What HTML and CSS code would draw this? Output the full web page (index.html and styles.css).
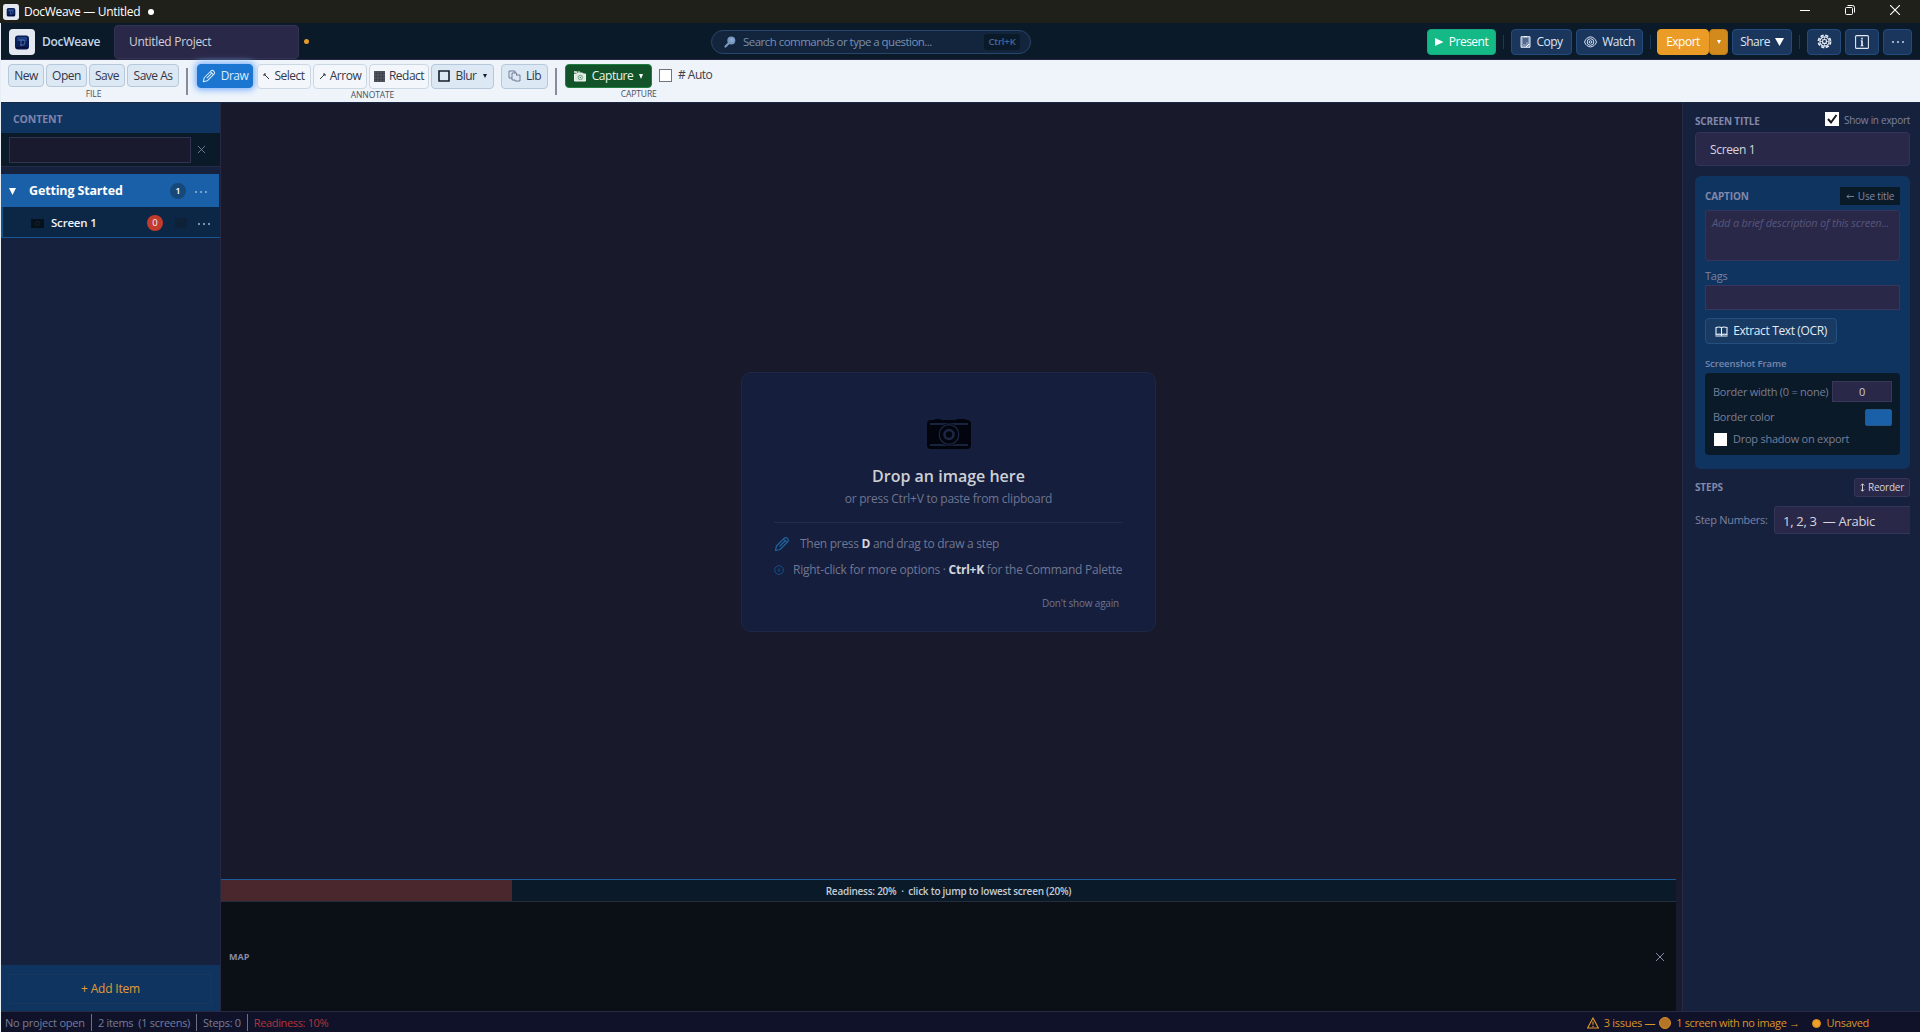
FILE: index.html
```html
<!DOCTYPE html>
<html lang="en">
<head>
<meta charset="utf-8">
<title>DocWeave — Untitled</title>
<link rel="stylesheet" href="styles.css">
</head>
<body>
<svg class="defs" width="0" height="0">
  <symbol id="pencil" viewBox="0 0 16 16"><path d="M1.500 14.500l1-4.500L10.500 2c1.800-1.500 5 1.500 3.500 3.500L6 13.500zM9.500 3l3.500 3.500M5.500 10.500L11 5" fill="none" stroke="currentColor" stroke-width="1.200" stroke-linejoin="round"/></symbol>
  <symbol id="close" viewBox="0 0 10 10"><path d="M1 1l8 8M9 1l-8 8" fill="none" stroke="currentColor" stroke-width="1"/></symbol>
  <symbol id="logo" viewBox="0 0 26 26"><rect width="26" height="26" rx="4" fill="#e4e8f0"/><rect x="6" y="6.500" width="14" height="14" rx="3" fill="#0b1d56"/><path d="M8 8h10v4H8z" fill="#254b94" opacity=".7"/><path d="M10 11h5q2 2 0 5h-4M12 11v6" fill="none" stroke="#5577b8" stroke-width=".8"/><path d="M7 18h12v1.500H7z" fill="#050d35"/></symbol>
</svg>
<div class="window">
  <div class="titlebar">
    <svg class="tb-logo"><use href="#logo"/></svg>
    <span class="tb-title">DocWeave — Untitled</span><i class="tb-dot"></i>
    <div class="winbtns">
      <svg width="10" height="10" viewBox="0 0 10 10"><path d="M0 5.500h10" stroke="#fff"/></svg>
      <svg width="10" height="10" viewBox="0 0 10 10"><path d="M.5 3.500q0-1 1-1h5q1 0 1 1v5q0 1-1 1h-5q-1 0-1-1zM2.500 .5h5q2 0 2 2v5" fill="none" stroke="#fff"/></svg>
      <svg width="10" height="10" viewBox="0 0 10 10"><path d="M0 0l10 10M10 0L0 10" stroke="#fff" stroke-width="1.100"/></svg>
    </div>
  </div>
  <div class="app">
    <header class="header">
      <svg class="logo"><use href="#logo"/></svg>
      <span class="brand">DocWeave</span>
      <div class="project">Untitled Project</div>
      <i class="dirty"></i>
      <div class="search">
        <svg width="12" height="12" viewBox="0 0 12 12"><circle cx="7.300" cy="4.500" r="4" fill="#7898c0"/><circle cx="7.800" cy="4" r="2" fill="#a2badb" opacity=".5"/><path d="M4.500 7.500L1.500 10.500" stroke="#7d99c0" stroke-width="2.200" stroke-linecap="round"/></svg>
        <span class="search-text">Search commands or type a question...</span>
        <kbd>Ctrl+K</kbd>
      </div>
      <nav class="actions">
        <button class="btn present"><svg width="9" height="8" viewBox="0 0 9 8"><path d="M0 0l8.500 4L0 8z" fill="#fff"/></svg>Present</button>
        <i class="hsep"></i>
        <button class="btn copy"><svg width="11" height="12" viewBox="0 0 11 12"><path d="M1 .7h9v10.600H1z" fill="#7f93b5" stroke="#e1eaf5"/><path d="M3 3h5M3 5h5M3 7h3" stroke="#243c63" stroke-width="1"/><path d="M4 .5h3M6 11l3-3" stroke="#fff"/></svg>Copy</button>
        <button class="btn watch"><svg width="13" height="12" viewBox="0 0 13 12"><g fill="none" stroke="#d8e4f2"><path d="M.5 6C3-.8 10-.8 12.500 6 10 12.500 3 12.500.5 6z"/><circle cx="6.500" cy="6" r="3.300"/><circle cx="6.500" cy="6" r="1.300"/></g></svg>Watch</button>
        <i class="hsep tight"></i>
        <div class="split"><button class="btn export">Export</button><button class="btn exdrop"><svg width="4" height="4" viewBox="0 0 4 4"><path d="M0 0h4L2 4z" fill="#fff"/></svg></button></div>
        <button class="btn share">Share<svg width="9" height="8" viewBox="0 0 9 8"><path d="M0 0h9L4.500 8z" fill="#fff"/></svg></button>
        <i class="hsep"></i>
        <button class="btn gear"><svg width="15" height="15" viewBox="0 0 15 15"><g fill="none" stroke="#e6eef8" stroke-width="1.100"><circle cx="7.500" cy="7.500" r="2"/><circle cx="7.500" cy="7.500" r="4.600"/><circle cx="7.500" cy="7.500" r="6.100" stroke-width="1.700" stroke-dasharray="3.190 1.600"/><path d="M7.500 3v2M7.500 10v2M3 7.500h2M10 7.500h2M4.300 4.300l1.500 1.500M9.200 9.200l1.500 1.500M10.700 4.300L9.200 5.800M5.800 9.200l-1.500 1.500" stroke-width=".7"/></g></svg></button>
        <button class="btn gear"><svg width="14" height="14" viewBox="0 0 14 14"><rect x=".6" y=".6" width="12.800" height="12.800" rx="1" fill="none" stroke="#dfe8f3" stroke-width="1.100"/><path d="M7 5.500v5.500M7 2.700v1.700" fill="none" stroke="#fff" stroke-width="1.500"/><path d="M5.700 5.700H7M5.500 10.800h3" stroke="#fff" stroke-width=".7"/></svg></button>
        <button class="btn more"><i></i><i></i><i></i></button>
      </nav>
    </header>
    <div class="toolbar">
      <section class="group">
        <div class="tools"><button class="tool w36">New</button><button class="tool w41">Open</button><button class="tool w36">Save</button><button class="tool w52">Save As</button></div>
        <small>FILE</small>
      </section>
      <i class="tsep"></i>
      <section class="group annotate">
        <div class="tools">
          <button class="tool draw"><svg width="14" height="14"><use href="#pencil"/></svg>Draw</button>
          <button class="tool light sel"><svg width="7" height="7" viewBox="0 0 7 7"><path d="M1 1l5 5M1 3V1h2" fill="none" stroke="#34343f"/></svg>Select</button>
          <button class="tool light arr"><svg width="7" height="7" viewBox="0 0 7 7"><path d="M1 6l5-5M4 1h2v2" fill="none" stroke="#34343f"/></svg>Arrow</button>
          <button class="tool light red"><svg width="11" height="11" viewBox="0 0 11 11"><path d="M0 0h11v11H0z" fill="#51545c"/><path d="M0 2.500h11M0 5.500h11M0 8.500h11M2.500 0v11M5.500 0v11M8.500 0v11" stroke="#3b3d46" stroke-width=".6"/></svg>Redact</button>
          <button class="tool blur"><svg width="12" height="12" viewBox="0 0 12 12"><path d="M1 1h10v10H1z" fill="none" stroke="#171c2b" stroke-width="1.600"/></svg>Blur<svg class="caret" width="4" height="4" viewBox="0 0 4 4"><path d="M0 0h4L2 4z" fill="#1b1b2b"/></svg></button>
          <button class="tool lib"><svg width="13" height="12" viewBox="0 0 13 12"><g fill="#dce8f4" stroke="#63708a" stroke-width=".9"><path d="M1 1h6v7H1z"/><path d="M4 8V3h4.500v7H4z"/><path d="M8.500 5H12v6H7v-1"/></g></svg>Lib</button>
        </div>
        <small>ANNOTATE</small>
      </section>
      <i class="tsep second"></i>
      <section class="group capgroup">
        <div class="tools">
          <button class="tool capture"><svg width="12" height="11" viewBox="0 0 12 11"><path d="M.5 3h2l1-1h5l1 1h2v7H.5zM1 0v2M3 .5L2.500 2M0 1h3M4 1h2" fill="#dbe8df" stroke="#eef5ef"/><circle cx="6.300" cy="6.500" r="2.200" fill="none" stroke="#7aa587"/><circle cx="6.300" cy="6.500" r=".7" fill="#4b7f5b"/></svg>Capture<svg class="caret" width="4" height="5" viewBox="0 0 4 5"><path d="M0 0h4L2 5z" fill="#fff"/></svg></button>
          <label class="auto"><i class="box"></i># Auto</label>
        </div>
        <small>CAPTURE</small>
      </section>
    </div>
    <div class="body">
      <aside class="sidebar">
        <h2>CONTENT</h2>
        <div class="filter"><div class="field"></div><svg width="9" height="9"><use href="#close"/></svg></div>
        <div class="chapter"><svg width="7" height="7" viewBox="0 0 7 7"><path d="M0 0h7L3.500 7z" fill="#fff"/></svg><b>Getting Started</b><span class="count">1</span><span class="dots"><i></i><i></i><i></i></span></div>
        <div class="screen"><svg class="thumb" width="13" height="10" viewBox="0 0 13 10"><path d="M0 1h13v9H0z" fill="#07111b"/><circle cx="6.500" cy="5.500" r="2" fill="none" stroke="#102232"/></svg><b>Screen 1</b><span class="count zero">0</span><i class="ghost"></i><span class="dots"><i></i><i></i><i></i></span></div>
        <div class="grow"></div>
        <div class="add"><button>+ Add Item</button></div>
      </aside>
      <main class="main">
        <div class="canvas">
          <div class="drop">
            <svg class="camera" width="46" height="32" viewBox="0 0 46 32"><path d="M4 2h4l1-1h5l1 1h15l1-1h8l1 1h1q4 0 4 4v21q0 4-4 4H5q-4 0-4-4V6q0-3 3-4z" fill="#02050d"/><path d="M4 6h38M4 27h38" stroke="#18233d" stroke-width="2"/><circle cx="23" cy="16.500" r="11" fill="#02050d"/><circle cx="23" cy="16.500" r="9.800" fill="none" stroke="#1b2745" stroke-width="1.300"/><circle cx="23" cy="16.500" r="4.500" fill="none" stroke="#1b2745" stroke-width="2.600"/></svg>
            <h1>Drop an image here</h1>
            <p class="sub">or press Ctrl+V to paste from clipboard</p>
            <hr>
            <p class="tip"><svg width="16" height="16"><use href="#pencil"/></svg><span>Then press <b>D</b> and drag to draw a step</span></p>
            <p class="tip two"><svg width="10" height="10" viewBox="0 0 10 10"><circle cx="5" cy="5" r="4.300" fill="none" stroke="#174f8d"/><path d="M5 3v4M3.500 5h3" stroke="#154273"/></svg><span>Right-click for more options · <b>Ctrl+K</b> for the Command Palette</span></p>
            <p class="dont">Don't show again</p>
          </div>
        </div>
        <div class="readiness"><div class="fill" style="width:20%"></div><span>Readiness: 20% &nbsp;·&nbsp; click to jump to lowest screen (20%)</span></div>
        <div class="map"><b>MAP</b><svg width="10" height="10"><use href="#close"/></svg></div>
      </main>
      <aside class="props">
        <div class="row head"><h3>SCREEN TITLE</h3><label class="show"><svg width="14" height="14" viewBox="0 0 14 14"><path d="M0 0h14v14H0z" fill="#fff"/><path d="M3 7l3 3.500L11.500 3" fill="none" stroke="#16161c" stroke-width="2"/></svg><span>Show in export</span></label></div>
        <div class="title-field"><span>Screen 1</span></div>
        <section class="card">
          <div class="row caprow"><h3>CAPTION</h3><button class="use"><svg width="8" height="5" viewBox="0 0 8 5"><path d="M8 2.500H1M3 .5l-2 2 2 2" fill="none" stroke="#8087a5" stroke-width=".9"/></svg>Use title</button></div>
          <div class="area"><em>Add a brief description of this screen...</em></div>
          <p class="tags">Tags</p>
          <div class="tag-field"></div>
          <button class="ocr"><svg width="13" height="11" viewBox="0 0 13 11"><path d="M1 1.500q3-1 5.500 0 2.500-1 5.500 0v7q-3-.7-5.500 0-2.500-.7-5.500 0zM6.500 1.500v8M.5 10h12" fill="none" stroke="#eaf2fb" stroke-width="1.100"/></svg><span>Extract Text (OCR)</span></button>
          <h4>Screenshot Frame</h4>
          <div class="frame">
            <div class="row bw"><span>Border width (0 = none)</span><div class="num">0</div></div>
            <div class="row bc"><span>Border color</span><i class="swatch"></i></div>
            <label class="shadow"><i></i><span>Drop shadow on export</span></label>
          </div>
        </section>
        <div class="row steps"><h3>STEPS</h3><button class="reorder"><svg width="5" height="9" viewBox="0 0 5 9"><path d="M2.500 1v7M.8 2.500L2.500 .8l1.700 1.700M.8 6.500l1.700 1.700 1.700-1.700" fill="none" stroke="#e0e0e8" stroke-width=".9"/></svg>Reorder</button></div>
        <div class="numbers"><span>Step Numbers:</span><div class="select">1, 2, 3&nbsp; — Arabic</div></div>
      </aside>
    </div>
    <footer class="status">
      <span class="s1">No project open</span><i></i><span class="s2">2 items &nbsp;(1 screens)</span><i></i><span class="s3">Steps: 0</span><i></i><span class="s4">Readiness: 10%</span>
      <div class="warn">
        <svg width="12" height="12" viewBox="0 0 12 12"><path d="M6 1l5.400 10H.6zM6 4.500v3.300M6 8.800v1.200" fill="none" stroke="#e39a27" stroke-width="1.100"/></svg>
        <span class="s5">3 issues —</span><i class="orb"></i><span class="s6">1 screen with no image →</span><i class="orb solid"></i><span class="s7">Unsaved</span>
      </div>
    </footer>
  </div>
</div>
</body>
</html>
```
FILE: styles.css
```css
* { box-sizing: border-box; }
body { margin: 0; font: 12px/16px "Open Sans", "Noto Sans", sans-serif; color: #e0e0e8; background: #1a1a2e; }
h1, h2, h3, h4, p { margin: 0; }
button { font: inherit; color: inherit; padding: 0; margin: 0; white-space: nowrap; }
svg { display: block; flex: none; }
span, b, label { white-space: nowrap; }
.defs { position: absolute; }
.window { width: 1920px; height: 1032px; display: flex; flex-direction: column; overflow: hidden; }

.titlebar { height: 23px; background: #20201b; display: flex; align-items: center; padding-left: 3px; color: #fff; }
.tb-logo { width: 16px; height: 16px; margin-right: 5px; }
.tb-title { font-size: 12px; letter-spacing: -.3px; }
.tb-dot { width: 6px; height: 6px; border-radius: 50%; background: #fff; margin: 1px 0 0 8px; }
.winbtns { margin-left: auto; display: flex; gap: 35px; padding-right: 20px; margin-top: -3px; }

.app { height: 1009px; border-left: 1px solid #e8eef5; display: flex; flex-direction: column; }
.header { height: 37px; background: #0b1a28; border-bottom: 1px solid #262944; display: flex; align-items: center; padding: 1px 8px 0; }
.logo { width: 26px; height: 26px; }
.brand { width: 79px; padding-left: 7px; font-weight: 600; font-size: 12px; letter-spacing: -.3px; color: #c3d7ec; }
.project { width: 185px; height: 34px; background: #2a2848; border: 1px solid #343253; border-radius: 4px; padding: 8px 14px; font-size: 12px; letter-spacing: -.3px; color: #cfd0da; }
.dirty { width: 5px; height: 5px; border-radius: 50%; background: #e29a2c; margin: 0 0 0 5px; }
.search { width: 320px; height: 24px; margin-left: 402px; border: 1px solid #28466b; border-radius: 12px; background: #13243d; display: flex; align-items: center; padding: 0 10px 0 12px; color: #7890b0; }
.search-text { margin-left: 7px; font-size: 11.500px; letter-spacing: -.53px; }
kbd { margin-left: auto; width: 36px; text-align: center; background: #0b1a28; border-radius: 3px; font: 600 9.500px/16px "Open Sans", sans-serif; letter-spacing: -.15px; color: #45699b; }
.actions { margin-left: auto; display: flex; align-items: center; }
.btn { height: 26px; border: 1px solid #234b7c; border-radius: 4px; background: #1b365d; color: #dbe6f4; display: flex; align-items: center; justify-content: center; font-size: 12px; gap: 5px; letter-spacing: -.5px; }
.present { width: 69px; background: #14b985; border-color: #17a97e; color: #fff; gap: 5px; }
.hsep { width: 1px; height: 14px; background: #1b3856; margin: 0 7px; }
.hsep.tight { margin-right: 6px; }
.copy { width: 61px; margin-right: 4px; }
.watch { width: 67px; }
.split { display: flex; margin-right: 4px; }
.export { width: 52px; background: #eb9c27; border-color: #eb9c27; color: #fff; }
.exdrop { width: 19px; background: #d38a1c; border-color: #c17d1d; }
.share { width: 60px; }
.gear { width: 34px; margin-right: 4px; }
.more { width: 29px; gap: 3px; }
.more i, .dots i { width: 2px; height: 2px; border-radius: 50%; background: #c5d4e8; }

.toolbar { height: 43px; background: #eef4fa; border-bottom: 1px solid #1a2744; display: flex; padding: 4px 0 0 7px; }
.group { display: flex; flex-direction: column; align-items: center; }
.tools { display: flex; gap: 2px; height: 24px; }
.group small { font-size: 8.500px; line-height: 10px; color: #4a5062; margin-top: 1px; letter-spacing: -.1px; }
.tool { height: 23px; border: 1px solid #b5c8dc; border-radius: 4px; background: #dce8f4; color: #34374a; display: flex; align-items: center; justify-content: center; font-size: 12px; letter-spacing: -.5px; gap: 5px; }
.w36 { width: 36px; } .w41 { width: 41px; } .w52 { width: 52px; }
.tsep { width: 2px; height: 27px; background: #878b9c; margin: 4px 9px 0 7px; }
.annotate .tools { height: 25px; }
.draw { width: 56px; height: 24px; margin-right: 2px; background: #1b76d2; border-color: #1b76d2; color: #dcecfc; box-shadow: 0 0 6px 2px #7eb1fb; }
.light { background: #f3f7fb; border-color: #ccd7e4; height: 25px; gap: 4px; padding-bottom: 1px; }
.sel { width: 54px; } .arr { width: 54px; } .red { width: 60px; }
.blur { width: 63px; height: 25px; padding-bottom: 1px; }
.blur .caret { margin-left: 1px; }
.lib { width: 47px; height: 25px; margin-left: 5px; padding-bottom: 1px; }
.tsep.second { margin: 4px 8px 0 7px; }
.capture { width: 87px; background: #12532a; border-color: #1f7e40; color: #e9f3eb; gap: 6px; height: 24px; }
.auto { display: flex; align-items: center; gap: 6px; margin-left: 5px; color: #3b3e4d; font-size: 12px; letter-spacing: -.5px; height: 22px; }
.box { width: 13px; height: 13px; border: 1px solid #70747c; background: #fff; }

.body { flex: 1; min-height: 0; display: flex; }
.sidebar { width: 220px; background: #16213e; border-right: 1px solid #272944; display: flex; flex-direction: column; }
.sidebar h2 { height: 30px; background: #0f3460; color: #8084ac; font: 700 10.500px/33px "Open Sans", sans-serif; letter-spacing: -.1px; padding-left: 12px; }
.filter { height: 34px; background: #0b1a28; border-bottom: 1px solid #262b45; display: flex; align-items: center; padding-left: 8px; gap: 6px; color: #77829b; }
.field { width: 182px; height: 26px; background: #1a1a2e; border: 1px solid #323350; }
.chapter { height: 33px; margin: 7px 1px 0 0; background: #1a60a8; display: flex; align-items: center; color: #fff; padding: 1px 0 0 8px; font-size: 12.500px; }
.chapter b { margin-left: 13px; width: 141px; letter-spacing: -.15px; }
.count { width: 16px; height: 16px; border-radius: 50%; background: #164879; text-align: center; font-size: 9.500px; font-weight: 600; line-height: 16px; }
.dots { display: flex; gap: 3px; margin-left: 9px; padding-top: 1px; }
.dots i { background: #9ab5d4; }
.screen { height: 31px; background: #0c2745; border-bottom: 1px solid #165794; border-left: 2px solid #15528b; display: flex; align-items: center; padding: 2px 0 0 28px; color: #eef4fb; font-size: 11.500px; }
.screen b { margin-left: 7px; width: 96px; font-weight: 600; letter-spacing: -.2px; }
.zero { background: #c23b2c; font-weight: 400; }
.ghost { width: 12px; height: 10px; background: #0d2238; margin-left: 12px; }
.screen .dots { margin-left: 11px; }
.grow { flex: 1; }
.add { height: 46px; background: #0f3460; padding: 9px 8px 7px 8px; }
.add button { width: 100%; height: 30px; background: #0f3460; border: 1px solid #1b365c; color: #e09c38; font-size: 12px; letter-spacing: -.2px; }

.main { width: 1461px; padding-right: 6px; display: flex; flex-direction: column; background: #1a1a2e; }
.canvas { flex: 1; background: #181a2c; padding: 269px 0 0 520px; margin-right: -6px; }
.drop { width: 415px; height: 260px; background: #151e3c; border: 1px solid #1d2844; border-radius: 10px; padding: 45px 32px 0; display: flex; flex-direction: column; color: #6e7591; }
.camera { align-self: center; }
.drop h1 { text-align: center; font: 600 16px/22px "Open Sans", sans-serif; color: #ced0d6; margin-top: 15px; }
.sub { text-align: center; line-height: 16px; margin-top: 4px; font-size: 12px; letter-spacing: -.25px; }
.drop hr { width: 100%; height: 1px; border: 0; background: #232d4b; margin: 15px 0 0; }
.tip { display: flex; align-items: center; height: 16px; margin-top: 13px; gap: 10px; font-size: 12px; letter-spacing: -.29px; color: #707793; }
.tip svg { color: #20649f; }
.tip.two { margin-top: 10px; gap: 9px; letter-spacing: -.25px; }
.tip b { color: #d3d6de; }
.dont { text-align: right; padding-right: 4px; margin-top: 18px; font-size: 10px; line-height: 14px; letter-spacing: -.2px; }
.readiness { height: 23px; background: #0b1a28; border-top: 1px solid #1c5b99; border-bottom: 1px solid #252c3b; display: grid; }
.readiness > * { grid-area: 1 / 1; }
.fill { background: #4a262d; }
.readiness span { place-self: center; font-size: 10px; font-weight: 600; line-height: 20px; letter-spacing: -.25px; color: #c4cdd8; }
.map { height: 109px; background: #0b1017; display: flex; align-items: center; justify-content: space-between; padding: 0 11px 0 8px; color: #878ba9; font-size: 9px; }

.props { width: 238px; background: #16213e; border-left: 1px solid #272b48; padding: 8px 10px 0 12px; color: #7d83a1; }
.row { display: flex; align-items: center; justify-content: space-between; }
h3 { font: 700 10px/16px "Open Sans", sans-serif; letter-spacing: -.15px; color: #8288aa; }
.head { height: 19px; }
.head h3 { padding-top: 1px; }
.show { display: flex; gap: 5px; font-size: 10px; letter-spacing: -.28px; margin-top: -1px; }
.title-field { height: 34px; margin-top: 2px; background: #2a2848; border: 1px solid #34345a; border-radius: 4px; padding: 9px 14px; color: #d5d6df; font-size: 12px; letter-spacing: -.35px; }
.card { margin-top: 10px; height: 293px; background: #0f3460; border-radius: 6px; padding: 10px; }
.caprow { height: 20px; }
.use { width: 60px; height: 18px; border: 0; background: #0b1a28; color: #8087a5; font-size: 10px; letter-spacing: -.2px; display: flex; align-items: center; justify-content: center; gap: 4px; }
.area { height: 51px; margin-top: 4px; background: #2a2848; border: 1px solid #34345a; border-radius: 3px; padding: 4px 6px; font-size: 11px; letter-spacing: -.2px; color: #56557b; overflow: hidden; }
.tags { font-size: 11px; line-height: 16px; margin-top: 7px; letter-spacing: -.2px; }
.tag-field { height: 25px; margin-top: 1px; background: #2a2848; border: 1px solid #38365b; }
.ocr { display: flex; align-items: center; justify-content: center; gap: 5px; width: 132px; height: 26px; margin-top: 8px; background: #183a63; border: 1px solid #245080; border-radius: 4px; color: #e1ebf6; font-size: 12px; letter-spacing: -.37px; }
h4 { font: 600 9.500px/16px "Open Sans", sans-serif; letter-spacing: -.1px; color: #7b86a9; margin-top: 12px; }
.frame { height: 82px; margin-top: 1px; background: #0b1a28; border-radius: 4px; padding: 8px; font-size: 11px; letter-spacing: -.25px; color: #777e9a; }
.bw { height: 21px; }
.num { width: 60px; height: 21px; background: #2a2848; border: 1px solid #393758; color: #c9cad6; text-align: center; line-height: 20px; }
.bc { height: 18px; margin-top: 6px; }
.swatch { width: 27px; height: 17px; border-radius: 2px; background: #1a60a8; border: 1px solid #275784; }
.shadow { display: flex; align-items: center; gap: 6px; margin-top: 5px; padding-left: 1px; }
.shadow i { width: 13px; height: 13px; background: #fff; }
.steps { height: 20px; margin-top: 8px; }
.reorder { width: 56px; height: 19px; border: 1px solid #37365a; border-radius: 3px; background: #2a2848; color: #d2d3dc; font-size: 10px; letter-spacing: -.25px; display: flex; align-items: center; justify-content: center; gap: 3px; }
.numbers { display: flex; align-items: center; justify-content: space-between; margin-top: 9px; font-size: 11px; letter-spacing: -.3px; }
.select { width: 136px; height: 28px; background: #2a2848; border: 1px solid #353558; border-right: 0; border-radius: 4px 0 0 4px; font-size: 13px; line-height: 28px; padding-left: 8px; color: #d5d6df; white-space: nowrap; }

.status { height: 21px; background: #10122a; border-top: 1px solid #262a42; display: flex; align-items: center; padding: 2px 0 0 4px; color: #777c98; font-size: 11px; letter-spacing: -.3px; }
.status > i { width: 1px; height: 17px; background: #6b7085; margin: 0 6px 1px; }
.s1 { letter-spacing: -.2px; }
.s4 { color: #b43439; letter-spacing: -.35px; }
.warn { margin-left: auto; margin-right: 51px; display: flex; align-items: center; color: #d99428; }
.s5 { margin-left: 5px; }
.s6 { letter-spacing: -.37px; }
.orb { width: 12px; height: 12px; border-radius: 50%; background: #b47528; border: 1px solid #d78c25; margin: 0 5px 0 4px; }
.orb.solid { width: 9px; height: 9px; background: #eea027; margin: 0 6px 0 12px; }
```
